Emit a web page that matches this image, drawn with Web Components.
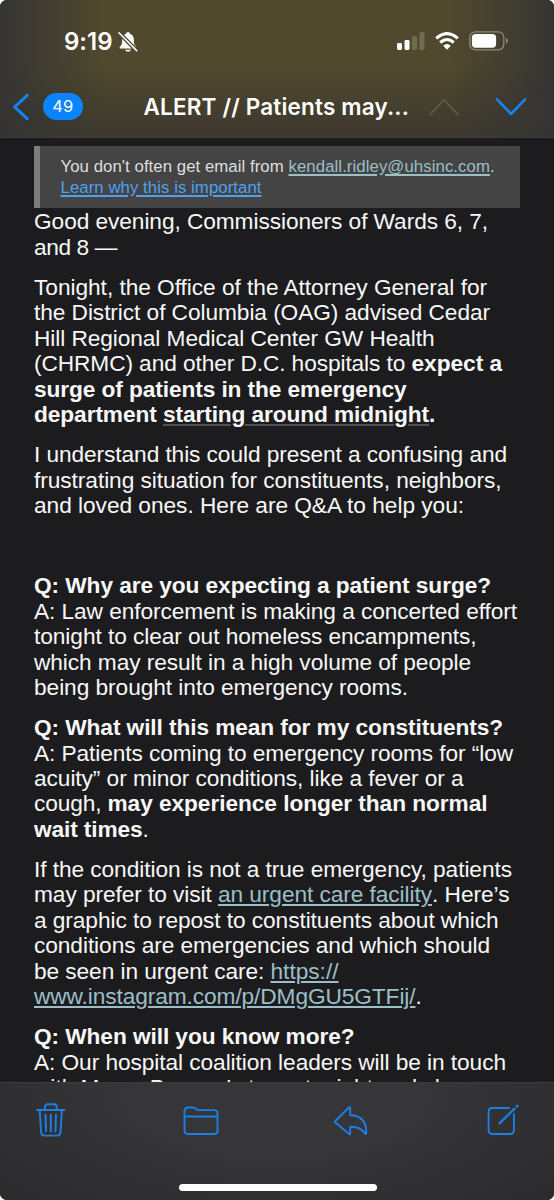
<!DOCTYPE html>
<html lang="en">
<head>
<meta charset="utf-8">
<title>Mail</title>
<style>
html{background:#fff}
body{margin:0;width:554px;height:1200px;overflow:hidden;font-family:"Liberation Sans",Arial,sans-serif}
</style>
</head>
<body>
<mail-screen></mail-screen>
<script>
const define = (name, html, after) => customElements.define(name, class extends HTMLElement {
  constructor() {
    super();
    const t = document.createElement('template');
    t.innerHTML = html;
    this.attachShadow({mode: 'open'}).append(t.content.cloneNode(true));
  }
  connectedCallback() { if (after) after(this); }
});

/* One run of text, tracked so that it ends at the given width. */
const fit = el => {
  const w = parseFloat(el.getAttribute('w'));
  if (!w) return;
  const natural = el.getBoundingClientRect().width;
  el.style.letterSpacing = ((w - natural) / [...el.textContent].length) + 'px';
};
define('text-run', `<style>
:host{display:inline-block;white-space:pre;vertical-align:baseline}
:host([bold]){font-weight:700}
:host([link]){color:#9bbfc6;text-decoration:underline;text-decoration-thickness:1.5px;text-underline-offset:2px}
:host([blue]){color:#4ea1f0;text-decoration:underline;text-decoration-thickness:1.5px;text-underline-offset:2px}
:host([date]){text-decoration:underline;text-decoration-color:#505055;text-decoration-thickness:1.5px;text-underline-offset:2px}
</style><slot></slot>`, fit);

define('text-line', `<style>:host{display:block;white-space:nowrap;height:25.38px;line-height:25.38px}</style><slot></slot>`);
define('mail-paragraph', `<style>:host{display:block;margin-bottom:14.9px}:host([spaced]){margin-bottom:55.2px}</style><slot></slot>`);

define('sender-notice', `<style>
:host{display:block;box-sizing:border-box;width:486px;height:62px;border-left:6px solid #7d7d7d;background:#444445;color:#dededf;padding:10px 0 0 20.500px;font-size:16.800px;line-height:21px;white-space:nowrap}
div{height:21px}
</style>
<div><text-run w="228">You don't often get email from </text-run><text-run link w="201.5">kendall.ridley@uhsinc.com</text-run>.</div>
<div><text-run blue w="201">Learn why this is important</text-run></div>`);

define('status-bar', `<style>
:host{display:flex;align-items:center;height:82px;box-sizing:border-box;padding:0 45px 0 64px;color:#fff}
.time{font:600 24px/30px Inter,sans-serif;padding-top:2px}
.bell{margin:2px 0 0 5px}
.right{margin-left:auto;display:flex;align-items:center}
svg{display:block}
</style>
<text-run class="time" w="48.5">9:19</text-run>
<svg class="bell" width="20" height="22" viewBox="0 0 20 22"><path d="M2 17.4q-1-.7.1-2 1.8-1.8 2-3.5V8.5Q4.500 4 8.100 2.800 8.300 1 10 1t1.900 1.800Q15.500 4 15.900 8.500v3.400q.2 1.700 2 3.500 1.100 1.300.1 2zM7 18.700h6q-.8 2-3 2t-3-2z" fill="#fff"/><path d="M.9 1.700 19 19.900" stroke="#50492f" stroke-width="4.200"/><path d="M.9 1.700 18.700 19.600" stroke="#fff" stroke-width="1.500" stroke-linecap="round"/></svg>
<div class="right">
<svg width="28" height="18" viewBox="0 0 28 18"><g fill="#fff"><rect x="0" y="11" width="5" height="7" rx="1.400"/><rect x="7.500" y="8" width="5" height="10" rx="1.400"/></g><g fill="#716b51"><rect x="15" y="4" width="5" height="14" rx="1.400"/><rect x="22.500" y="0" width="5" height="18" rx="1.400"/></g></svg>
<svg style="margin-left:10px" width="24" height="18" viewBox="0 0 24 18"><g fill="none" stroke="#fff" stroke-width="3.100"><path d="M1.200 6.300Q12-3.100 22.800 6.300"/><path d="M5.200 10.500q6.800-6 13.600 0"/></g><path d="M8.200 13.700q3.800-3.300 7.600 0L12 17.700z" fill="#fff"/></svg>
<svg style="margin-left:10px" width="40" height="20" viewBox="0 0 40 20"><rect x=".8" y=".8" width="34" height="18" rx="5.500" fill="none" stroke="#918b70" stroke-width="1.300"/><rect x="2.900" y="2.900" width="24.200" height="13.800" rx="3.700" fill="#fff"/><path d="M37 6.800q2 1 2 3t-2 3z" fill="#918b70"/></svg>
</div>`);

define('nav-bar', `<style>
:host{display:flex;align-items:center;height:55px;box-sizing:border-box;padding:0 27px 6px 12px;color:#fff}
.badge{margin-left:12px;width:39.500px;height:27px;border-radius:14px;background:#0a84ff;font:400 16.500px/27px Inter,sans-serif;text-align:center}
.title{margin-left:61px;font:600 22.500px/28px Inter,sans-serif}
svg{display:block}
</style>
<svg width="19" height="28" viewBox="0 0 19 28"><path d="M15.200 2.300 2.600 14l12.600 11.700" fill="none" stroke="#1683f0" stroke-width="3" stroke-linecap="round" stroke-linejoin="round"/></svg>
<div class="badge">49</div>
<text-run class="title" w="265.500">ALERT // Patients may...</text-run>
<svg style="margin-left:18.500px" width="32" height="20" viewBox="0 0 32 20"><path d="M2 17.500 16 2.800l14 14.700" fill="none" stroke="#5b564b" stroke-width="2.200" stroke-linecap="round" stroke-linejoin="round"/></svg>
<svg style="margin-left:auto" width="32" height="20" viewBox="0 0 32 20"><path d="m2 2.300 14 14.700L30 2.300" fill="none" stroke="#1683f0" stroke-width="2.600" stroke-linecap="round" stroke-linejoin="round"/></svg>`);

define('tool-bar', `<style>
:host{display:flex;flex-direction:column;box-sizing:border-box;height:118px;border-top:1px solid #3c3c3e;padding:19px 34px 0 35px;background:radial-gradient(ellipse 390px 165px at 50% 10%,#363638 35%,#2a2a2c 100%)}
.icons{display:flex;justify-content:space-between;height:38px}
svg{display:block;fill:none;stroke:#1c7fe6;stroke-width:1.900;stroke-linecap:round;stroke-linejoin:round}
.home{width:198px;height:7px;border-radius:4px;background:#fff;margin:43.500px auto 0}
</style>
<div class="icons">
<svg width="32" height="38" viewBox="0 0 32 38"><path d="M2 8h27.500M10 7.500V5q0-2.700 2.700-2.700h6.200q2.700 0 2.700 2.700v2.500M4.700 8.300l1.400 22q.2 3.300 3.400 3.300h12.600q3.200 0 3.400-3.300l1.400-22M10.500 12.600l.5 16.600M15.800 12.600v16.600M21 12.600l-.5 16.600"/></svg>
<svg width="36" height="38" viewBox="0 0 36 38"><path d="M1.500 28.500V9q0-3.500 3.500-3.500h4.500q1.700 0 3 1.100l.8.700q1 .8 2.500.8H31q3.500 0 3.500 3.500v16.900q0 3.500-3.500 3.500H5q-3.500 0-3.500-3.500zM1.500 14.500h33"/></svg>
<svg width="36" height="38" viewBox="0 0 36 38"><path d="M1.200 19 14.800 5.700q1.400-1.200 1.400.3v7.200q16 .2 16.100 17.500 0 2.500-1.500.7-4-6.900-14.600-6.700v6.800q0 1.500-1.400.3L1.200 20.300q-.6-.6 0-1.300z"/></svg>
<svg width="34" height="38" viewBox="0 0 34 38"><path d="M23 6H6.500Q2.600 6 2.600 9.900v18.200Q2.600 32 6.500 32H24q3.900 0 3.900-3.900V12"/><path d="m13.500 21.300 15.100-14.600" stroke-width="2.300"/><path d="m31 4.200.1-.1" stroke-width="3"/></svg>
</div><div class="home"></div>`);

define('mail-body', `<style>
:host{display:block;overflow:hidden;background:#1c1c1e;color:#f8f8f8;font-size:22.700px;padding:8px 0 0 34px;height:944px;box-sizing:border-box}
.copy{padding-top:1.400px}
</style>
<sender-notice></sender-notice>
<div class="copy">
<mail-paragraph>
<text-line><text-run w="454">Good evening, Commissioners of Wards 6, 7,</text-run></text-line>
<text-line><text-run w="83">and 8 —</text-run></text-line></mail-paragraph>
<mail-paragraph>
<text-line><text-run w="453">Tonight, the Office of the Attorney General for</text-run></text-line>
<text-line><text-run w="456">the District of Columbia (OAG) advised Cedar</text-run></text-line>
<text-line><text-run w="400.500">Hill Regional Medical Center GW Health</text-run></text-line>
<text-line><text-run w="377.500">(CHRMC) and other D.C. hospitals to </text-run><text-run bold w="90.500">expect a</text-run></text-line>
<text-line><text-run bold w="372.500">surge of patients in the emergency</text-run></text-line>
<text-line><text-run bold w="129">department </text-run><text-run bold date w="266">starting around midnight</text-run><text-run bold>.</text-run></text-line></mail-paragraph>
<mail-paragraph spaced>
<text-line><text-run w="473">I understand this could present a confusing and</text-run></text-line>
<text-line><text-run w="467.500">frustrating situation for constituents, neighbors,</text-run></text-line>
<text-line><text-run w="430">and loved ones. Here are Q&amp;A to help you:</text-run></text-line></mail-paragraph>
<mail-paragraph>
<text-line><text-run bold w="457">Q: Why are you expecting a patient surge?</text-run></text-line>
<text-line><text-run w="483">A: Law enforcement is making a concerted effort</text-run></text-line>
<text-line><text-run w="442.500">tonight to clear out homeless encampments,</text-run></text-line>
<text-line><text-run w="437">which may result in a high volume of people</text-run></text-line>
<text-line><text-run w="374">being brought into emergency rooms.</text-run></text-line></mail-paragraph>
<mail-paragraph>
<text-line><text-run bold w="469">Q: What will this mean for my constituents?</text-run></text-line>
<text-line><text-run w="479">A: Patients coming to emergency rooms for “low</text-run></text-line>
<text-line><text-run w="429.500">acuity” or minor conditions, like a fever or a</text-run></text-line>
<text-line><text-run w="73.500">cough, </text-run><text-run bold w="380">may experience longer than normal</text-run></text-line>
<text-line><text-run bold w="108.500">wait times</text-run>.</text-line></mail-paragraph>
<mail-paragraph>
<text-line><text-run w="478">If the condition is not a true emergency, patients</text-run></text-line>
<text-line><text-run w="184">may prefer to visit </text-run><text-run link w="214">an urgent care facility</text-run><text-run w="77.500">. Here’s</text-run></text-line>
<text-line><text-run w="464.500">a graphic to repost to constituents about which</text-run></text-line>
<text-line><text-run w="456">conditions are emergencies and which should</text-run></text-line>
<text-line><text-run w="236.500">be seen in urgent care: </text-run><text-run link w="68">https://</text-run></text-line>
<text-line><text-run link w="381.500">www.instagram.com/p/DMgGU5GTFij/</text-run>.</text-line></mail-paragraph>
<mail-paragraph>
<text-line><text-run bold w="320.500">Q: When will you know more?</text-run></text-line>
<text-line><text-run w="472">A: Our hospital coalition leaders will be in touch</text-run></text-line>
<text-line><text-run w="446">with Mayor Bowser’s team tonight and share</text-run></text-line></mail-paragraph>
</div>`);

define('mail-screen', `<style>
:host{display:flex;flex-direction:column;width:554px;height:1200px;border-radius:7px;overflow:hidden;background:#1c1c1e}
header{height:138px;flex:none;border-bottom:1px solid #424036;box-sizing:border-box;background:linear-gradient(90deg,#353433 0,rgba(53,52,51,0) 19%,rgba(53,52,51,0) 81%,#353433 100%),linear-gradient(#51492d 0,#51492d 48%,#3b382e 100%)}
</style>
<header><status-bar></status-bar><nav-bar></nav-bar></header>
<mail-body></mail-body><tool-bar></tool-bar>`);
</script>
</body>
</html>
